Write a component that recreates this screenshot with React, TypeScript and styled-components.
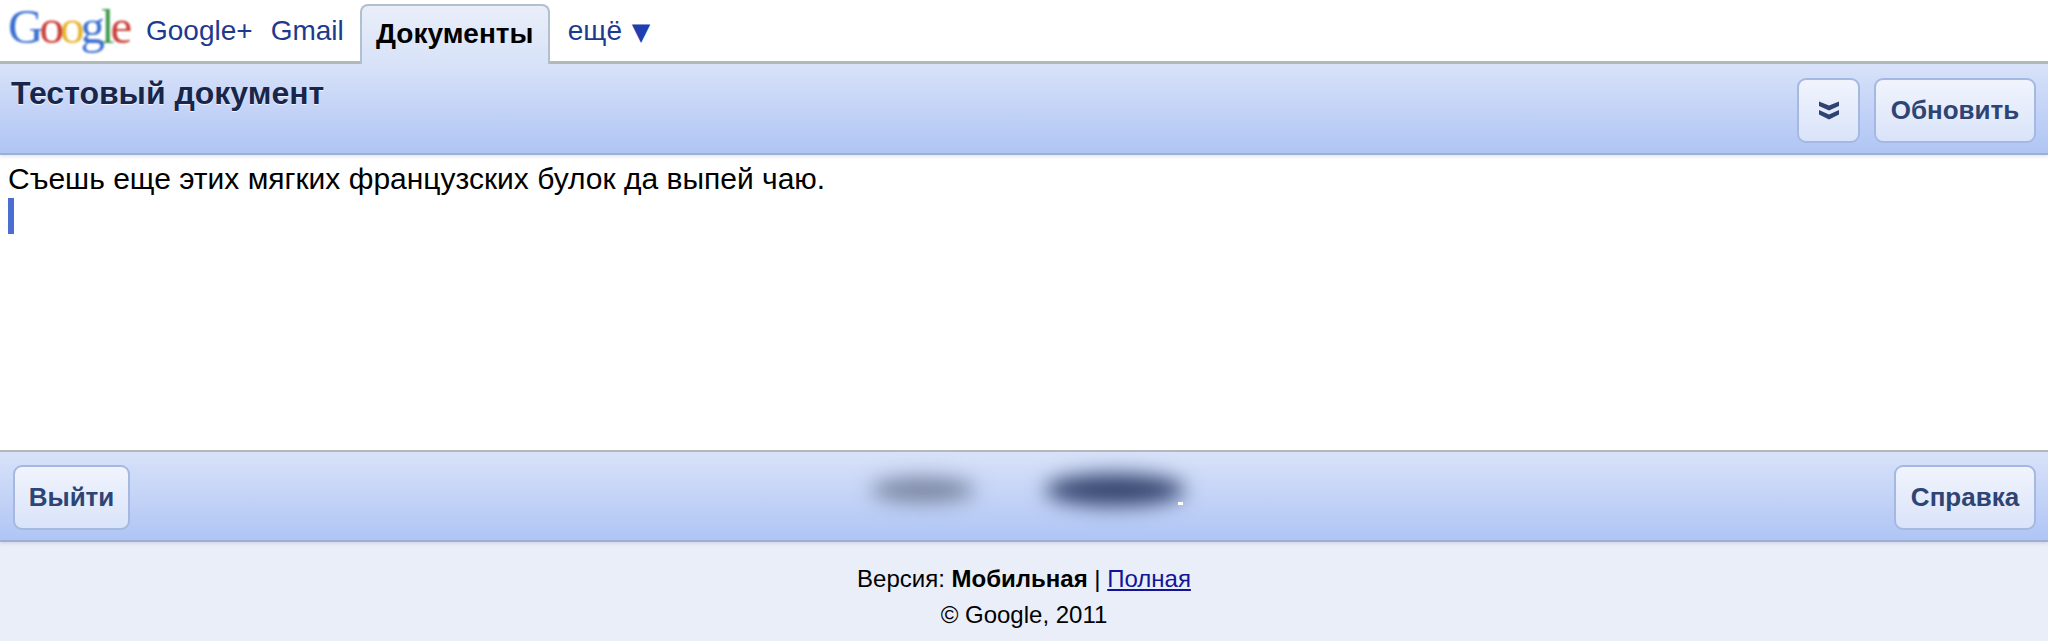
import styled, { createGlobalStyle } from 'styled-components';

const GlobalStyle = createGlobalStyle`
  html, body {
    margin: 0;
    padding: 0;
    background: #fff;
  }
  body {
    font-family: "Liberation Sans", Arial, sans-serif;
    color: #000;
  }
`;

function App() {
  return (
    <Page>
      <GlobalStyle />
      <TopNav>
        <Logo>
          <Letter $color="#3a6fd0">G</Letter>
          <Letter $color="#c9403a">o</Letter>
          <Letter $color="#e6b530">o</Letter>
          <Letter $color="#3a6fd0">g</Letter>
          <Letter $color="#3c9a4a">l</Letter>
          <Letter $color="#c9403a">e</Letter>
        </Logo>
        <NavLink $left={16}>Google+</NavLink>
        <NavLink $left={18}>Gmail</NavLink>
        <ActiveTab>Документы</ActiveTab>
        <NavLink $left={18}>
          ещё <Arrow>▼</Arrow>
        </NavLink>
      </TopNav>
      <Bar $height={91} $top={1}>
        <Title>Тестовый документ</Title>
        <BarActions>
          <Button $width={63} aria-label="expand">
            <svg width="22" height="19" viewBox="0 0 22 19" fill="none">
              <path d="M1 0.5 L11 4.5 L21 0.5 V5 L11 9.5 L1 5 Z" fill="#2f4373" />
              <path d="M1 9 L11 13.5 L21 9 V13.5 L11 18.5 L1 13.5 Z" fill="#2f4373" />
            </svg>
          </Button>
          <Button $width={162}>Обновить</Button>
        </BarActions>
      </Bar>
      <Editor>
        <EditorLine>Съешь еще этих мягких французских булок да выпей чаю.</EditorLine>
        <Caret />
      </Editor>
      <Bar $height={90} $top={13}>
        <Button $width={117}>Выйти</Button>
        <Account>
          <Blur $width={104} $height={24} $color="#76829d" />
          <BlurWrap>
            <Blur $width={140} $height={32} $color="#34446e" />
            <Spark />
          </BlurWrap>
        </Account>
        <Button $width={142}>Справка</Button>
      </Bar>
      <Footer>
        <FooterLine>
          Версия: <b>Мобильная</b> | <FooterLink href="#">Полная</FooterLink>
        </FooterLine>
        <FooterLine>© Google, 2011</FooterLine>
      </Footer>
    </Page>
  );
}

export default App;

const Page = styled.div`
  width: 2048px;
  height: 641px;
  display: flex;
  flex-direction: column;
  overflow: hidden;
  background: #e9eef9;
`;

const TopNav = styled.div`
  height: 61px;
  flex-shrink: 0;
  display: flex;
  align-items: flex-end;
  padding-left: 8px;
  background: #fff;
  border-bottom: 3px solid #b1b9b9;
`;

const Logo = styled.div`
  width: 122px;
  height: 61px;
  font-family: "Liberation Serif", serif;
  font-size: 49px;
  line-height: 54px;
  letter-spacing: -4px;
  filter: blur(0.8px);
`;

const Letter = styled.span<{ $color: string }>`
  color: ${(p) => p.$color};
`;

const NavLink = styled.div<{ $left: number }>`
  margin-left: ${(p) => p.$left}px;
  height: 61px;
  line-height: 62px;
  font-size: 28px;
  color: #1e3a8e;
`;

const Arrow = styled.span`
  font-family: "DejaVu Sans", sans-serif;
  font-size: 24px;
  margin-left: 2px;
  color: #1d3fb0;
`;

const ActiveTab = styled.div`
  margin-left: 16px;
  margin-bottom: -3px;
  width: 190px;
  height: 60px;
  box-sizing: border-box;
  text-align: center;
  line-height: 55px;
  font-size: 28px;
  font-weight: bold;
  background: linear-gradient(#e9eef9, #d8e2f8);
  border: 2px solid #b1c0cf;
  border-bottom: none;
  border-radius: 8px 8px 0 0;
`;

const Bar = styled.div<{ $height: number; $top: number }>`
  height: ${(p) => p.$height}px;
  flex-shrink: 0;
  box-sizing: border-box;
  display: flex;
  justify-content: space-between;
  align-items: flex-start;
  padding: ${(p) => p.$top}px 12px 0 13px;
  background: linear-gradient(#d8e2f9, #b0c5f5);
  border-bottom: 2px solid #9eafd6;
  box-shadow: 0 2px 3px rgba(120, 130, 160, 0.18);
  position: relative;
`;

const Title = styled.h1`
  margin: 0;
  margin-left: -2px;
  padding-top: 10px;
  font-size: 32px;
  line-height: 36px;
  font-weight: bold;
  color: #17264a;
  text-shadow: 0 1px 1px rgba(255, 255, 255, 0.8);
`;

const BarActions = styled.div`
  display: flex;
  gap: 14px;
  padding-top: 13px;
`;

const Button = styled.button<{ $width: number }>`
  width: ${(p) => p.$width}px;
  height: 65px;
  padding: 0;
  display: flex;
  align-items: center;
  justify-content: center;
  font-family: inherit;
  font-size: 26px;
  font-weight: bold;
  color: #2e4474;
  background: linear-gradient(#f1f4fd, #d9e3f9);
  border: 2px solid #a4b8e2;
  border-radius: 9px;
`;

const Editor = styled.div`
  flex: 1;
  padding: 5px 8px 0;
  background: #fff;
  border-bottom: 2px solid #b1b9b9;
`;

const EditorLine = styled.div`
  font-size: 30px;
  line-height: 38px;
`;

const Caret = styled.div`
  width: 6px;
  height: 36px;
  background: #4a6fd0;
`;

const Account = styled.div`
  position: absolute;
  left: 871px;
  top: 22px;
  display: flex;
  align-items: center;
  gap: 70px;
`;

const BlurWrap = styled.div`
  position: relative;
`;

const Blur = styled.div<{ $width: number; $height: number; $color: string }>`
  width: ${(p) => p.$width}px;
  height: ${(p) => p.$height}px;
  border-radius: 50%;
  background: ${(p) => p.$color};
  filter: blur(10px);
`;

const Spark = styled.div`
  position: absolute;
  right: 2px;
  bottom: 1px;
  width: 5px;
  height: 3px;
  background: #fff;
  filter: blur(0.6px);
`;

const Footer = styled.div`
  height: 99px;
  flex-shrink: 0;
  padding-top: 19px;
  box-sizing: border-box;
  text-align: center;
`;

const FooterLine = styled.div`
  font-size: 24px;
  line-height: 36px;
`;

const FooterLink = styled.a`
  color: #13139a;
`;
